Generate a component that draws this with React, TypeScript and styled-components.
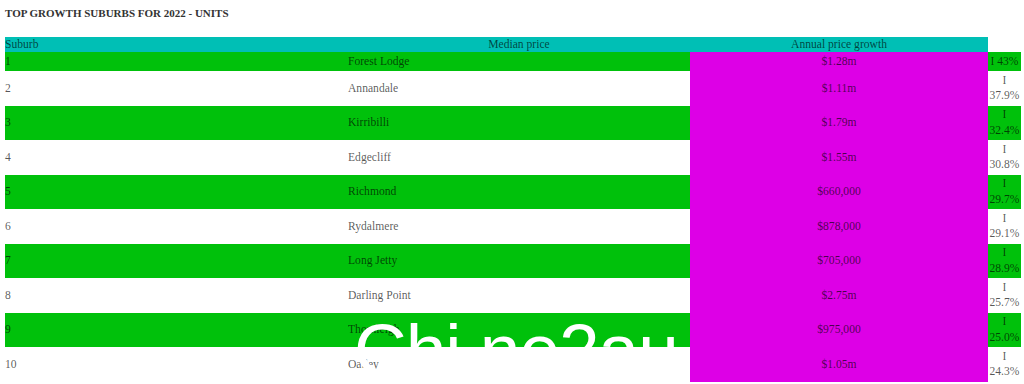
import * as React from "react";
import styled, { createGlobalStyle } from "styled-components";

const colors = {
  header: "#00bfb5",
  stripe: "#00c10b",
  price: "#dd00e6",
  text: "rgba(0, 0, 0, 0.66)",
  title: "#333333",
};

const GlobalStyle = createGlobalStyle`
  html, body {
    margin: 0;
    padding: 0;
    background: #ffffff;
  }
  body {
    font-family: "Liberation Serif", "Times New Roman", serif;
    color: ${colors.text};
  }
`;

const Page = styled.div`
  position: relative;
  padding: 7px 3px 0 5px;
  overflow: hidden;
  height: 384px;
  box-sizing: border-box;
`;

const Title = styled.h2`
  margin: 0 0 17px;
  font-size: 11px;
  line-height: 13px;
  font-weight: bold;
  color: ${colors.title};
`;

const Table = styled.table`
  width: 1016px;
  border-collapse: collapse;
  border-spacing: 0;
  table-layout: fixed;
  font-size: 11.6px;
`;

const HeadCell = styled.th<{ $align?: string }>`
  padding: 0;
  font-weight: normal;
  line-height: 15px;
  text-align: ${(p) => p.$align || "center"};
  background: ${colors.header};
`;

const Row = styled.tr<{ $striped: boolean }>`
  background: ${(p) => (p.$striped ? colors.stripe : "transparent")};
`;

const Cell = styled.td<{ $align?: string }>`
  padding: 1.75px 0;
  line-height: 15.5px;
  vertical-align: middle;
  text-align: ${(p) => p.$align || "left"};
`;

const PriceCell = styled(Cell)`
  position: relative;
  z-index: 2;
  background: ${colors.price};
`;

// site watermark, sits over the rows but under the price column
const Watermark = styled.div`
  position: absolute;
  left: 354px;
  top: 313px;
  z-index: 1;
  font-family: "Liberation Sans", Arial, sans-serif;
  font-size: 73px;
  line-height: 1;
  letter-spacing: -1px;
  color: #ffffff;
  white-space: nowrap;
  pointer-events: none;
`;

const rows = [
  { suburb: "Forest Lodge", price: "$1.28m", growth: "43%" },
  { suburb: "Annandale", price: "$1.11m", growth: "37.9%" },
  { suburb: "Kirribilli", price: "$1.79m", growth: "32.4%" },
  { suburb: "Edgecliff", price: "$1.55m", growth: "30.8%" },
  { suburb: "Richmond", price: "$660,000", growth: "29.7%" },
  { suburb: "Rydalmere", price: "$878,000", growth: "29.1%" },
  { suburb: "Long Jetty", price: "$705,000", growth: "28.9%" },
  { suburb: "Darling Point", price: "$2.75m", growth: "25.7%" },
  { suburb: "Thornleigh", price: "$975,000", growth: "25.0%" },
  { suburb: "Oatley", price: "$1.05m", growth: "24.3%" },
];

export default function App() {
  return (
    <Page>
      <GlobalStyle />
      <Title>TOP GROWTH SUBURBS FOR 2022 - UNITS</Title>
      <Table>
        <colgroup>
          <col style={{ width: 343 }} />
          <col style={{ width: 342 }} />
          <col style={{ width: 298 }} />
          <col style={{ width: 33 }} />
        </colgroup>
        <thead>
          <tr>
            <HeadCell $align="left">Suburb</HeadCell>
            <HeadCell>Median price</HeadCell>
            <HeadCell>Annual price growth</HeadCell>
          </tr>
        </thead>
        <tbody>
          {rows.map((r, i) => (
            <Row key={r.suburb} $striped={i % 2 === 0}>
              <Cell>{i + 1}</Cell>
              <Cell>{r.suburb}</Cell>
              <PriceCell $align="center">{r.price}</PriceCell>
              <Cell $align="center">
                <span>I</span> {r.growth}
              </Cell>
            </Row>
          ))}
        </tbody>
      </Table>
      <Watermark>Chi ne2au</Watermark>
    </Page>
  );
}
